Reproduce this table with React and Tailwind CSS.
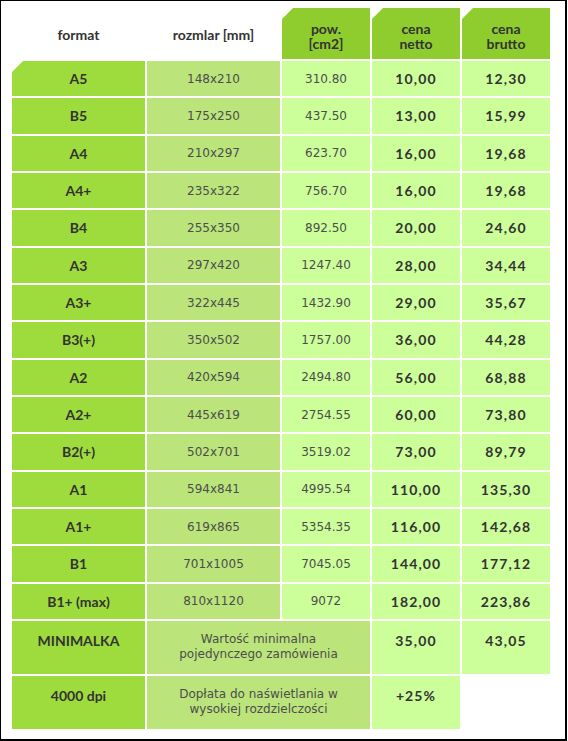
const rows = [
    ['A5', '148x210', '310.80', '10,00', '12,30'],
    ['B5', '175x250', '437.50', '13,00', '15,99'],
    ['A4', '210x297', '623.70', '16,00', '19,68'],
    ['A4+', '235x322', '756.70', '16,00', '19,68'],
    ['B4', '255x350', '892.50', '20,00', '24,60'],
    ['A3', '297x420', '1247.40', '28,00', '34,44'],
    ['A3+', '322x445', '1432.90', '29,00', '35,67'],
    ['B3(+)', '350x502', '1757.00', '36,00', '44,28'],
    ['A2', '420x594', '2494.80', '56,00', '68,88'],
    ['A2+', '445x619', '2754.55', '60,00', '73,80'],
    ['B2(+)', '502x701', '3519.02', '73,00', '89,79'],
    ['A1', '594x841', '4995.54', '110,00', '135,30'],
    ['A1+', '619x865', '5354.35', '116,00', '142,68'],
    ['B1', '701x1005', '7045.05', '144,00', '177,12'],
    ['B1+ (max)', '810x1120', '9072', '182,00', '223,86'],
];

// top-left corner cut of the green header tabs
const cut = '[clip-path:polygon(11px_0,100%_0,100%_100%,0_100%,0_11px)]';
const bold = "font-['Lato',sans-serif] font-bold text-[14px] text-[#333]";
const price = "font-['Lato',sans-serif] font-bold text-[14px] text-[#333] tracking-[1.1px]";
const thin = "font-['DejaVu_Sans',sans-serif] text-[12px] text-[#4d4d4d]";

export default function App() {
    return (
        <div className="w-[567px] h-[741px] bg-white border-l border-t border-r-2 border-b-2 border-black pl-[11px] pt-[7px]">
            <div className="grid grid-cols-[133px_133px_88px_88px_88px] grid-rows-[51px_repeat(15,35.33px)_53px_53px] gap-[2px]">
                {/* header */}
                <div className={`flex items-center justify-center pt-[1px] ${bold}`}>format</div>
                <div className={`flex items-center justify-center pt-[1px] ${bold}`}>rozmlar [mm]</div>
                <div className={`flex items-center justify-center text-center leading-[15px] pt-[4px] bg-[#8fcd2f] ${cut} ${bold}`}>pow.<br />[cm2]</div>
                <div className={`flex items-center justify-center text-center leading-[15px] pt-[4px] bg-[#8fcd2f] ${cut} ${bold}`}>cena<br />netto</div>
                <div className={`flex items-center justify-center text-center leading-[15px] pt-[4px] bg-[#8fcd2f] ${cut} ${bold}`}>cena<br />brutto</div>

                {rows.map((r, i) => (
                    <div key={r[0]} className="contents">
                        <div className={`flex items-center justify-center bg-[#9edb3c] ${i === 0 ? cut : ''} ${bold}`}>{r[0]}</div>
                        <div className={`flex items-center justify-center bg-[#bbe47b] ${thin}`}>{r[1]}</div>
                        <div className={`flex items-center justify-center bg-[#ccfe99] ${thin}`}>{r[2]}</div>
                        <div className={`flex items-center justify-center bg-[#ccfe99] ${price}`}>{r[3]}</div>
                        <div className={`flex items-center justify-center bg-[#ccfe99] ${price}`}>{r[4]}</div>
                    </div>
                ))}

                {/* extra rows */}
                <div className={`flex justify-center pt-[9px] bg-[#9edb3c] ${bold}`}>MINIMALKA</div>
                <div className={`col-span-2 flex items-center justify-center text-center leading-[15px] bg-[#bbe47b] ${thin}`}>Wartość minimalna<br />pojedynczego zamówienia</div>
                <div className={`flex justify-center pt-[9px] bg-[#ccfe99] ${price}`}>35,00</div>
                <div className={`flex justify-center pt-[9px] bg-[#ccfe99] ${price}`}>43,05</div>

                <div className={`flex justify-center pt-[9px] bg-[#9edb3c] ${bold}`}>4000 dpi</div>
                <div className={`col-span-2 flex items-center justify-center text-center leading-[15px] bg-[#bbe47b] ${thin}`}>Dopłata do naświetlania w<br />wysokiej rozdzielczości</div>
                <div className={`flex justify-center pt-[9px] bg-[#ccfe99] ${price}`}>+25%</div>
                <div />
            </div>
        </div>
    );
}
